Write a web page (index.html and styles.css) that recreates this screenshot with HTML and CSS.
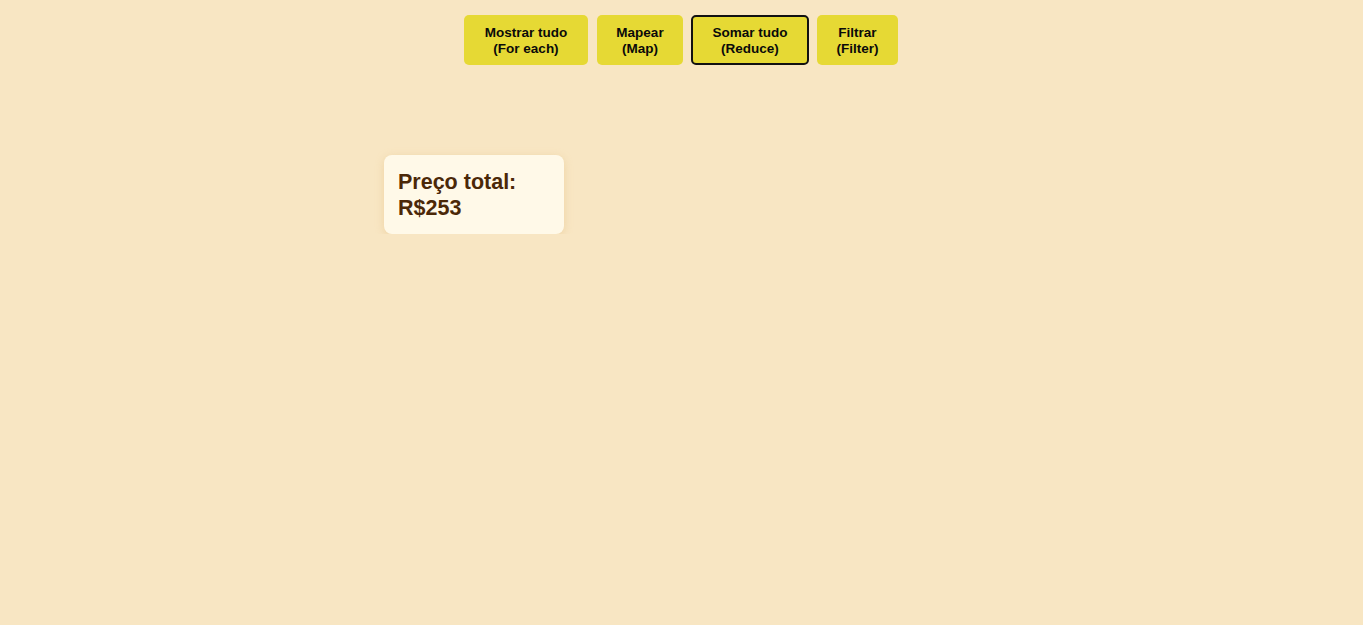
FILE: index.html
```html
<!DOCTYPE html>
<html lang="pt-BR">
<head>
<meta charset="utf-8">
<title>Array methods</title>
<link rel="stylesheet" href="styles.css">
</head>
<body>
  <nav class="menu">
    <button class="btn btn-foreach">Mostrar tudo<br>(For each)</button>
    <button class="btn btn-map">Mapear<br>(Map)</button>
    <button class="btn btn-reduce active">Somar tudo<br>(Reduce)</button>
    <button class="btn btn-filter">Filtrar<br>(Filter)</button>
  </nav>
  <main class="content">
    <div class="card">
      <h2 class="total">Preço total: R$253</h2>
    </div>
  </main>
</body>
</html>
```
FILE: styles.css
```css
html, body {
  margin: 0;
  padding: 0;
  background: #f8e6c3;
  font-family: "Liberation Sans", Arial, sans-serif;
}
.menu {
  display: flex;
  justify-content: center;
  gap: 8px;
  padding-top: 15px;
  padding-right: 1px;
}
.btn {
  font-family: "Liberation Sans", Arial, sans-serif;
  font-weight: bold;
  font-size: 13.5px;
  line-height: 16px;
  color: #0a0a0a;
  background: #e6d934;
  border: 2px solid transparent;
  border-radius: 5px;
  padding: 8px 0 6px;
  cursor: pointer;
  text-align: center;
}
.btn-foreach { width: 124px; margin-right: 1px; }
.btn-map { width: 86px; }
.btn-reduce { width: 118px; }
.btn-filter { width: 81px; }
.btn.active {
  border-color: #111;
}
.content {
  width: 595px;
  margin: 90px auto 0;
}
.card {
  width: 180px;
  box-sizing: border-box;
  padding: 14px 14px 13px;
  background: #fff9e8;
  border-radius: 8px;
  box-shadow: 0 2px 8px rgba(225, 185, 120, 0.4);
}
.total {
  margin: 0;
  font-size: 21.5px;
  line-height: 26px;
  font-weight: bold;
  color: #4b2808;
}
```
